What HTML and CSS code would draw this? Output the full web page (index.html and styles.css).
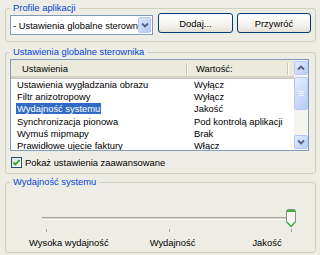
FILE: index.html
```html
<!DOCTYPE html>
<html lang="pl">
<head>
<meta charset="utf-8">
<link rel="stylesheet" href="styles.css">
</head>
<body>
<div class="page">
  <fieldset class="group g1">
    <legend>Profile aplikacji</legend>
    <div class="row">
      <div class="combo">
        <span class="combo-text">- Ustawienia globalne sterown</span>
        <span class="combo-btn"><svg width="8" height="6" viewBox="0 0 8 6"><polyline points="1,1.5 4,4.5 7,1.5" fill="none" stroke="#4d6185" stroke-width="1.8"/></svg></span>
      </div>
      <button class="btn btn-add">Dodaj...</button>
      <button class="btn btn-restore">Przywróć</button>
    </div>
  </fieldset>

  <fieldset class="group g2">
    <legend>Ustawienia globalne sterownika</legend>
    <div class="list">
      <div class="list-main">
        <div class="list-head">
          <span class="hc c1">Ustawienia</span>
          <span class="hc c2">Wartość:</span>
          <span class="hc c3"></span>
        </div>
        <div class="list-body">
          <div class="lrow"><span class="c1"><span class="t">Ustawienia wygładzania obrazu</span></span><span class="c2">Wyłącz</span></div>
          <div class="lrow"><span class="c1"><span class="t">Filtr anizotropowy</span></span><span class="c2">Wyłącz</span></div>
          <div class="lrow sel"><span class="c1"><span class="t">Wydajność systemu</span></span><span class="c2">Jakość</span></div>
          <div class="lrow"><span class="c1"><span class="t">Synchronizacja pionowa</span></span><span class="c2">Pod kontrolą aplikacji</span></div>
          <div class="lrow"><span class="c1"><span class="t">Wymuś mipmapy</span></span><span class="c2">Brak</span></div>
          <div class="lrow"><span class="c1"><span class="t">Prawidłowe ujęcie faktury</span></span><span class="c2">Włącz</span></div>
        </div>
      </div>
      <div class="sb">
        <span class="sb-btn"><svg width="8" height="6" viewBox="0 0 8 6"><polyline points="1,4.5 4,1.5 7,4.5" fill="none" stroke="#4d6185" stroke-width="1.8"/></svg></span>
        <span class="sb-thumb"><span class="grip"></span></span>
        <span class="sb-track"></span>
        <span class="sb-btn"><svg width="8" height="6" viewBox="0 0 8 6"><polyline points="1,1.5 4,4.5 7,1.5" fill="none" stroke="#4d6185" stroke-width="1.8"/></svg></span>
      </div>
    </div>
    <label class="check">
      <span class="cbox"><svg width="9" height="9" viewBox="0 0 9 9"><polyline points="1.5,4.5 3.5,6.5 7.5,2" fill="none" stroke="#21a121" stroke-width="1.8"/></svg></span>
      <span>Pokaż ustawienia zaawansowane</span>
    </label>
  </fieldset>

  <fieldset class="group g3">
    <legend>Wydajność systemu</legend>
    <div class="slider-row">
      <div class="track"></div>
      <svg class="thumb" width="10" height="19" viewBox="0 0 10 19">
        <path d="M1.5,0.5 H8.5 L9.5,1.5 V13 L5,18 L0.5,13 V1.5 Z" fill="#f6f5f0" stroke="#8e8f8a"/>
        <rect x="1" y="1" width="8" height="2" fill="#3cb53c"/>
        <polyline points="1,13 5,17.3 9,13" fill="none" stroke="#3cb53c" stroke-width="1.2"/>
      </svg>
    </div>
    <div class="ticks"><i></i><i></i><i></i></div>
    <div class="labels">
      <span>Wysoka wydajność</span>
      <span class="lb2">Wydajność</span>
      <span class="lb3">Jakość</span>
    </div>
  </fieldset>
</div>
</body>
</html>
```

FILE: styles.css
```css
* { box-sizing: border-box; }
html, body { margin: 0; padding: 0; }
body {
  width: 320px;
  height: 255px;
  overflow: hidden;
  background: #eeede5;
  font-family: "Liberation Sans", Arial, sans-serif;
  font-size: 9.4px;
  color: #000;
}
.page { padding: 0 4px 0 5px; }

.group {
  margin: 0;
  border: 1px solid #d0d0bf;
  border-radius: 3px;
  padding: 0 3px 0 4px;
  min-width: 0;
}
.group legend {
  padding: 0 3px;
  line-height: 10px;
  color: #0046d5;
}

/* group 1 */
.g1 { margin-top: 3px; padding-bottom: 6px; }
.row { display: flex; align-items: flex-start; }
.combo {
  margin-top: 2px;
  width: 143px;
  height: 20px;
  border: 1px solid #7f9db9;
  background: #fff;
  display: flex;
  align-items: center;
  padding-left: 2px;
}
.combo-text { flex: 1; white-space: nowrap; }
.combo-btn {
  width: 13px;
  height: 16px;
  margin-right: 1px;
  border: 1px solid #b6c8f3;
  border-radius: 2px;
  background: linear-gradient(135deg, #dde7fd, #b5c9f5);
  display: flex;
  align-items: center;
  justify-content: center;
}
.btn {
  height: 20px;
  padding: 0;
  border: 1px solid #003c74;
  border-radius: 3px;
  background: linear-gradient(#ffffff, #f4f3ee 60%, #e3e0d4);
  font: inherit;
  color: #000;
}
.btn-add { width: 75px; margin-left: 5px; }
.btn-restore { width: 74px; margin-left: 4px; }

/* group 2 */
.g2 { margin-top: 5px; padding-top: 2px; padding-bottom: 5px; }
.list {
  display: flex;
  width: 299px;
  height: 92px;
  border: 1px solid #7f9db9;
  background: #fff;
}
.list-main { flex: 1; overflow: hidden; }
.list-head {
  display: flex;
  height: 19px;
  background: #ebeadb;
  border-bottom: 1px solid #cbc7b8;
  box-shadow: inset 0 -2px 0 #d6d2c2;
  line-height: 17px;
}
.hc { position: relative; }
.hc.c1 { width: 176px; padding-left: 11px; }
.hc.c2 { width: 101px; padding-left: 9px; }
.hc.c3 { flex: 1; }
.hc.c1::after, .hc.c2::after {
  content: "";
  position: absolute;
  right: 0;
  top: 3px;
  bottom: 3px;
  width: 1px;
  background: #c7c5b2;
  box-shadow: 1px 0 0 #fff;
}
.lrow { display: flex; height: 12.2px; line-height: 12.2px; white-space: nowrap; }
.lrow .c1 { width: 176px; padding-left: 5px; }
.lrow .c1 .t { padding: 0 1px; }
.lrow .c2 { padding-left: 7px; }
.lrow.sel .t { background: #316ac5; color: #fff; }

.sb {
  width: 14px;
  display: flex;
  flex-direction: column;
  background: #f4f3ee;
  padding: 1px 0;
}
.sb-btn, .sb-thumb {
  border: 1px solid #b6c8f3;
  border-radius: 2px;
  background: linear-gradient(135deg, #e3ebfe, #bacdf6);
  display: flex;
  align-items: center;
  justify-content: center;
}
.sb-btn { height: 14px; }
.sb-thumb { height: 33px; margin-top: 2px; }
.grip {
  width: 6px;
  height: 5px;
  border-top: 1px solid #eef3fe;
  border-bottom: 1px solid #eef3fe;
  background: linear-gradient(#eef3fe, #eef3fe) center / 6px 1px no-repeat;
}
.sb-track { flex: 1; }

.check {
  display: flex;
  align-items: center;
  margin-top: 6px;
  height: 11px;
  padding-left: 1px;
}
.cbox {
  width: 11px;
  height: 11px;
  border: 1px solid #1c5180;
  background: linear-gradient(135deg, #dcdcd7, #ffffff);
  display: flex;
  align-items: center;
  justify-content: center;
  margin-right: 3px;
}

/* group 3 */
.g3 { margin-top: 3px; padding-top: 22px; padding-bottom: 4px; }
.slider-row {
  position: relative;
  margin-left: 32px;
  width: 254px;
  height: 18px;
  display: flex;
  align-items: center;
}
.track {
  width: 100%;
  height: 3px;
  border-top: 1px solid #a6a49c;
  border-bottom: 1px solid #ffffff;
  background: #d9d7cd;
}
.thumb { position: absolute; left: 244px; top: 0; }
.ticks {
  margin-top: 2px;
  margin-left: 36px;
  width: 246px;
  height: 3px;
  display: flex;
  justify-content: space-between;
}
.ticks i { width: 1px; background: #a5a39a; }
.labels {
  display: flex;
  margin-top: 6px;
  padding-left: 19px;
  line-height: 10px;
  white-space: nowrap;
}
.lb2 { margin-left: 41px; }
.lb3 { margin-left: 57px; }
```
